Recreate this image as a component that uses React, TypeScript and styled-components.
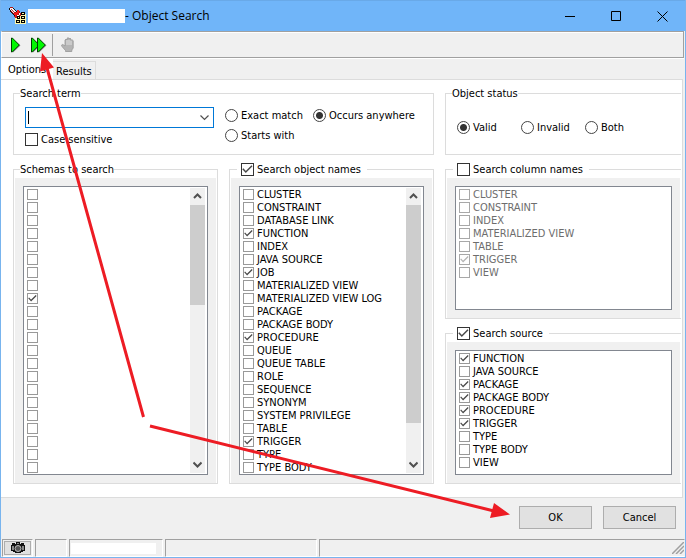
import React from "react";
import styled, { createGlobalStyle, css } from "styled-components";

const GlobalStyle = createGlobalStyle`
  *, *::before, *::after { box-sizing: border-box; }
  body {
    margin: 0;
    background: #f0f0f0;
    color: #000;
    font: 11px/13px "DejaVu Sans Condensed", "Noto Sans", sans-serif;
  }
  button, input { font: inherit; color: inherit; }
`;

const Window = styled.div`
  position: relative;
  display: flex;
  flex-direction: column;
  min-height: 100vh;
  border: 1px solid #78b4ee;
  border-top: 0;
  background: #f0f0f0;
  overflow: hidden;
`;

const TitleBar = styled.header`
  display: flex;
  align-items: center;
  height: 31px;
  padding-left: 8px;
  background: #70b5f9;
  border-top: 1px solid #69a9e8;
`;

const AppIcon = styled.svg`
  flex: none;
  width: 18px;
  height: 18px;
  margin-right: 1px;
`;

const Redacted = styled.span<{ $w: number; $h: number }>`
  flex: none;
  width: ${(p) => p.$w}px;
  height: ${(p) => p.$h}px;
  background: #fff;
`;

const Title = styled.h1`
  flex: 1;
  margin: 0;
  font: 12px/16px "Open Sans", "Noto Sans", sans-serif;
  white-space: nowrap;
`;

const CaptionButton = styled.button`
  display: grid;
  place-items: center;
  width: 46px;
  height: 30px;
  padding: 0;
  border: 0;
  background: none;
`;

const Toolbar = styled.div`
  display: flex;
  align-items: center;
  height: 27px;
  margin: 0 1px 0 0;
  padding-left: 2px;
  border: 1px solid #a0a0a0;
  border-left-color: #fff;
  box-shadow: inset 0 1px #fff, 0 1px #fff;
`;

const ToolButton = styled.button`
  display: grid;
  place-items: center;
  width: 23px;
  height: 22px;
  padding: 0;
  border: 0;
  background: none;
`;

const Separator = styled.span`
  width: 1px;
  height: 22px;
  margin: 0 3px 0 2px;
  background: #a0a0a0;
`;

const Tabs = styled.div`
  display: flex;
  align-items: flex-end;
  height: 20px;
  margin-top: 1px;
`;

const Tab = styled.button<{ $active?: boolean }>`
  height: 18px;
  padding: 1px 3px 0;
  border: 1px solid #dcdcdc;
  border-bottom: 0;
  border-left: 0;
  background: #f0f0f0;
  text-align: left;
  ${(p) =>
    p.$active &&
    css`
      height: 20px;
      width: 52px;
      padding: 0 0 0 7px;
      border-color: #fff;
      background: #fff;
    `}
`;

const Page = styled.main`
  flex: 1;
  display: grid;
  grid-template-columns: 205fr 205fr 236fr;
  grid-template-rows: 68px 1fr;
  gap: 8px 11px;
  margin-right: 2px;
  padding: 7px 1px 13px 12px;
  background: #fff;
  border: solid #dcdcdc;
  border-width: 1px 1px 1px 0;
`;

const Group = styled.fieldset<{ $wide?: boolean; $open?: boolean }>`
  display: flex;
  flex-direction: column;
  min-width: 0;
  margin: 0;
  padding: 0 1px;
  border: 1px solid #dcdcdc;
  ${(p) => p.$wide && "grid-column: span 2;"}
  ${(p) => p.$open && "border-right: 0;"}
`;

const Legend = styled.legend<{ $check?: boolean }>`
  height: 13px;
  margin-left: ${(p) => (p.$check ? 6 : 5)}px;
  padding: 0 ${(p) => (p.$check ? 6 : 0)}px 0 ${(p) => (p.$check ? 4 : 0)}px;
  white-space: nowrap;
`;

const RightColumn = styled.div`
  display: grid;
  grid-template-rows: 156px 1fr;
  gap: 8px;
  min-width: 0;
`;

const ListArea = styled.div`
  flex: 1;
  display: flex;
  margin-top: 2px;
  padding: 8px;
  background: #f0f0f0;
`;

const ListBox = styled.div<{ $disabled?: boolean }>`
  flex: 1;
  display: flex;
  min-width: 0;
  border: 1px solid #828790;
  background: #fff;
  color: ${(p) => (p.$disabled ? "#6d6d6d" : "#000")};
`;

const Items = styled.ul`
  flex: 1;
  margin: 0;
  padding: 1px 0 0 3px;
  list-style: none;
`;

const Item = styled.label`
  display: flex;
  align-items: center;
  gap: 3px;
  height: 13px;
  line-height: 15px;
  white-space: nowrap;
`;

const CHECK =
  "url(\"data:image/svg+xml,%3Csvg xmlns='http://www.w3.org/2000/svg' viewBox='0 0 11 11'%3E%3Cpath d='M.8 4.800 3.800 8 10 1.800' fill='none' stroke='%23484848' stroke-width='1.5'/%3E%3C/svg%3E\")";
const CHECK_OFF = CHECK.replace("%23484848", "%23b4b4b4");

const Check = styled.input.attrs({ type: "checkbox" })<{ $large?: boolean }>`
  appearance: none;
  flex: none;
  width: ${(p) => (p.$large ? 13 : 11)}px;
  height: ${(p) => (p.$large ? 13 : 11)}px;
  margin: 0;
  border: 1px solid ${(p) => (p.$large ? "#333" : "#999")};
  background: #fff center / 100% 100% no-repeat;
  &:checked { background-image: ${CHECK}; }
  &:disabled { border-color: #a8a8a8; }
  &:disabled:checked { background-image: ${CHECK_OFF}; }
`;

const Option = styled.label`
  display: flex;
  align-items: center;
  gap: 3px;
  height: 13px;
  line-height: 15px;
  white-space: nowrap;
`;

const Radio = styled.input.attrs({ type: "radio" })`
  appearance: none;
  flex: none;
  width: 13px;
  height: 13px;
  margin: 0;
  border: 1px solid #444;
  border-radius: 50%;
  background: #fff;
  &:checked { background: radial-gradient(circle, #333 3px, #fff 4px); }
`;

const TermBody = styled.div`
  display: grid;
  grid-template-columns: 189px 1fr;
  column-gap: 11px;
  padding: 7px 10px 0;
`;

const TermColumn = styled.div`
  display: flex;
  flex-direction: column;
  gap: 5px;
`;

const ComboBox = styled.div`
  display: flex;
  align-items: center;
  height: 21px;
  padding-left: 2px;
  border: 1px solid #0078d7;
  background: #fff;
`;

const Caret = styled.span`
  width: 1px;
  height: 13px;
  background: #000;
`;

const ComboInput = styled.input`
  flex: 1;
  min-width: 0;
  padding: 0 2px;
  border: 0;
  outline: 0;
  background: none;
`;

const ComboButton = styled.button`
  display: grid;
  place-items: center;
  width: 17px;
  height: 19px;
  padding: 0;
  border: 0;
  background: none;
`;

const MatchOptions = styled.div`
  display: grid;
  grid-template-columns: 88px auto;
  align-content: start;
  gap: 7px 0;
  padding-top: 2px;
`;

const StatusOptions = styled.div`
  display: grid;
  grid-template-columns: 64px 64px auto;
  padding: 21px 10px 0;
`;

const ScrollTrack = styled.div`
  display: flex;
  flex-direction: column;
  justify-content: space-between;
  width: 15px;
  margin: 1px 2px 1px 0;
  background: #f0f0f0;
`;

const ScrollButton = styled.button`
  display: grid;
  place-items: center;
  flex: none;
  width: 15px;
  height: 17px;
  padding: 0;
  border: 0;
  background: none;
`;

const ScrollRail = styled.div`
  flex: 1;
`;

const Thumb = styled.div<{ $size: number }>`
  height: ${(p) => p.$size}%;
  background: #cdcdcd;
`;

const Footer = styled.footer`
  display: flex;
  justify-content: flex-end;
  gap: 11px;
  height: 41px;
  padding: 8px 9px 0;
`;

const PushButton = styled.button`
  width: 73px;
  height: 23px;
  padding: 0;
  border: 1px solid #adadad;
  background: #e1e1e1;
`;

const StatusBar = styled.div`
  display: flex;
  gap: 2px;
  height: 18px;
  padding-left: 1px;
`;

const StatusPanel = styled.div<{ $w?: number }>`
  ${(p) => (p.$w ? `width: ${p.$w}px;` : "flex: 1;")}
  display: flex;
  align-items: center;
  justify-content: ${(p) => (p.$w ? "flex-start" : "flex-end")};
  border: 1px solid #a0a0a0;
  border-right-color: ${(p) => (p.$w ? "#fff" : "#f0f0f0")};
  border-bottom-color: #fff;
  padding-left: 1px;
`;

const CameraButton = styled.button`
  display: grid;
  place-items: center;
  width: 27px;
  height: 14px;
  padding: 0;
  border: 1px solid #adadad;
  background: #e1e1e1;
`;

const Annotation = styled.svg`
  position: absolute;
  top: 0;
  left: 0;
  pointer-events: none;
`;

function FlashlightIcon() {
  return (
    <AppIcon viewBox="0 0 18 18" shapeRendering="crispEdges" aria-hidden="true">
      <path d="M6 9h2V8h2V7h7v10H6z" fill="#fff7a8" />
      <path d="M0 1h1V0h3v1h1v1h1v1h1v1h1V3h2v1h1v2h1v3h-1v1H9v1H6v-1H5V8H4V7H3V6H2V5H1V3H0z" fill="#b01818" />
      <path d="M0 1h1v2h1v2h1v1h1v1h1v1h1v1H5V8H4V7H3V6H2V5H1V3H0zM4 1h1v1h1v1h1v1h1v1H7V4H6V3H5V2H4z" fill="#111" />
      <path d="M1 1h3v1h1v1h1v1h1v1H5v1H4V5H3V4H2V3H1z" fill="#f4f4f4" />
      <path d="M2 2h1v1h1v1h1v1H4V4H3V3H2z" fill="#c03030" />
      <path d="M8 3h2v3H9v2H7v2H6V8H5V6h2V5h1z" fill="#f01818" />
      <path d="M10 6h1v2h-1v1H8V8h2z" fill="#fff" />
      <g fill="#fff7a8" stroke="#000">
        <rect x="8.500" y="9.500" width="2" height="2" />
        <rect x="12.500" y="5.500" width="3" height="2" />
        <rect x="12.500" y="9.500" width="3" height="2" />
        <rect x="7.500" y="13.500" width="3" height="2" />
        <rect x="12.500" y="13.500" width="3" height="2" />
      </g>
    </AppIcon>
  );
}

function PlayIcon({ double = false }: { double?: boolean }) {
  const shapes = double ? [0, 6] : [0];
  return (
    <svg width={double ? 16 : 10} height="16" viewBox={double ? "0 0 16 16" : "0 0 10 16"} aria-hidden="true">
      {shapes.map((x) => (
        <g key={x} transform={`translate(${x} 0)`}>
          <path d="M2 2.500v13l7.500-7z" fill="#8c8c8c" />
          <path d="M.5 1v14h.8l7-7-7-7z" fill="#00f800" stroke="#003c00" />
        </g>
      ))}
    </svg>
  );
}

function HandIcon() {
  return (
    <svg width="14" height="16" viewBox="0 0 14 16" aria-hidden="true">
      <path
        d="M4.500 14.500v-1L1 9.500.6 8l1.100-.6L4 9V3l1-.8 1 .8V1.500l1-.9 1 .9V2l1-.8 1 .8v1.500l1.200-.6 1 .8V11l-1.400 2v1.500z"
        fill="#b4b4b4"
        stroke="#959595"
        strokeWidth=".8"
      />
      <path d="M6 3v5M8 3v5M10 3.500V8" stroke="#ececec" strokeWidth=".8" />
    </svg>
  );
}

function Chevron({ up = false, thin = false }: { up?: boolean; thin?: boolean }) {
  return (
    <svg width="9" height="7" viewBox="0 0 9 7" aria-hidden="true">
      <path
        d={up ? "M1 5 4.500 1.500 8 5" : "M.5 1.500l4 4 4-4"}
        fill="none"
        stroke="#505050"
        strokeWidth={thin ? 1.2 : 2}
      />
    </svg>
  );
}

function ScrollBar({ size }: { size: number }) {
  return (
    <ScrollTrack>
      <ScrollButton aria-label="Scroll up"><Chevron up /></ScrollButton>
      <ScrollRail><Thumb $size={size} /></ScrollRail>
      <ScrollButton aria-label="Scroll down"><Chevron /></ScrollButton>
    </ScrollTrack>
  );
}

interface CheckListProps {
  names: string[];
  checked: number[];
  disabled?: boolean;
  thumb?: number;
}

function CheckList({ names, checked, disabled, thumb }: CheckListProps) {
  return (
    <ListArea>
      <ListBox $disabled={disabled}>
        <Items>
          {names.map((name, i) => (
            <li key={i}>
              <Item>
                <Check
                  defaultChecked={checked.includes(i)}
                  disabled={disabled}
                  aria-label={name ? undefined : `Schema ${i + 1}`}
                />
                {name}
              </Item>
            </li>
          ))}
        </Items>
        {thumb !== undefined && <ScrollBar size={thumb} />}
      </ListBox>
    </ListArea>
  );
}

function CheckLegend({ text, checked }: { text: string; checked?: boolean }) {
  return (
    <Legend $check>
      <Option>
        <Check $large defaultChecked={checked} />
        {text}
      </Option>
    </Legend>
  );
}

const SCHEMAS: string[] = Array(22).fill("");
const OBJECTS = [
  "CLUSTER", "CONSTRAINT", "DATABASE LINK", "FUNCTION", "INDEX", "JAVA SOURCE", "JOB",
  "MATERIALIZED VIEW", "MATERIALIZED VIEW LOG", "PACKAGE", "PACKAGE BODY", "PROCEDURE",
  "QUEUE", "QUEUE TABLE", "ROLE", "SEQUENCE", "SYNONYM", "SYSTEM PRIVILEGE", "TABLE",
  "TRIGGER", "TYPE", "TYPE BODY",
];
const COLUMNS = ["CLUSTER", "CONSTRAINT", "INDEX", "MATERIALIZED VIEW", "TABLE", "TRIGGER", "VIEW"];
const SOURCES = [
  "FUNCTION", "JAVA SOURCE", "PACKAGE", "PACKAGE BODY", "PROCEDURE", "TRIGGER", "TYPE",
  "TYPE BODY", "VIEW",
];

export default function App() {
  return (
    <>
      <GlobalStyle />
      <Window>
        <TitleBar>
          <FlashlightIcon />
          <Redacted $w={97} $h={14} />
          <Title>- Object Search</Title>
          <CaptionButton aria-label="Minimize">
            <svg width="11" height="11"><path d="M0 5.500h10" stroke="#000" /></svg>
          </CaptionButton>
          <CaptionButton aria-label="Maximize">
            <svg width="11" height="11"><path d="M.5.5h9v9h-9z" fill="none" stroke="#000" /></svg>
          </CaptionButton>
          <CaptionButton aria-label="Close">
            <svg width="11" height="11"><path d="M.5.5l10 10M10.500.5l-10 10" stroke="#000" /></svg>
          </CaptionButton>
        </TitleBar>

        <Toolbar role="toolbar">
          <ToolButton aria-label="Search"><PlayIcon /></ToolButton>
          <ToolButton aria-label="Search all"><PlayIcon double /></ToolButton>
          <Separator />
          <ToolButton aria-label="Stop" disabled><HandIcon /></ToolButton>
        </Toolbar>

        <Tabs role="tablist">
          <Tab $active role="tab" aria-selected="true">Options</Tab>
          <Tab role="tab" aria-selected="false">Results</Tab>
        </Tabs>

        <Page>
          <Group $wide>
            <Legend>Search term</Legend>
            <TermBody>
              <TermColumn>
                <ComboBox>
                  <Caret />
                  <ComboInput role="combobox" aria-expanded="false" aria-label="Search term" />
                  <ComboButton aria-label="Show history"><Chevron thin /></ComboButton>
                </ComboBox>
                <Option><Check $large />Case sensitive</Option>
              </TermColumn>
              <MatchOptions>
                <Option><Radio name="match" />Exact match</Option>
                <Option><Radio name="match" defaultChecked />Occurs anywhere</Option>
                <Option><Radio name="match" />Starts with</Option>
              </MatchOptions>
            </TermBody>
          </Group>

          <Group $open>
            <Legend>Object status</Legend>
            <StatusOptions>
              <Option><Radio name="status" defaultChecked />Valid</Option>
              <Option><Radio name="status" />Invalid</Option>
              <Option><Radio name="status" />Both</Option>
            </StatusOptions>
          </Group>

          <Group>
            <Legend>Schemas to search</Legend>
            <CheckList names={SCHEMAS} checked={[8]} thumb={40} />
          </Group>

          <Group>
            <CheckLegend text="Search object names" checked />
            <CheckList names={OBJECTS} checked={[3, 6, 11, 19]} thumb={87} />
          </Group>

          <RightColumn>
            <Group $open>
              <CheckLegend text="Search column names" />
              <CheckList names={COLUMNS} checked={[5]} disabled />
            </Group>
            <Group $open>
              <CheckLegend text="Search source" checked />
              <CheckList names={SOURCES} checked={[0, 2, 3, 4, 5]} />
            </Group>
          </RightColumn>
        </Page>

        <Footer>
          <PushButton>OK</PushButton>
          <PushButton>Cancel</PushButton>
        </Footer>

        <StatusBar>
          <StatusPanel $w={31}>
            <CameraButton aria-label="Capture">
              <svg width="14" height="12" viewBox="0 0 14 12" aria-hidden="true">
                <path d="M0 3h1V1h3v1h1V0h4v2h1V1h3v2h1v6h-2v1h-2v1H4v-1H2V9H0z" fill="#111" />
                <path d="M1 4h2v4H1zM11 4h2v4h-2zM6 1h2v1H6z" fill="#888" />
                <circle cx="7" cy="6.500" r="3" fill="#555" stroke="#bbb" />
              </svg>
            </CameraButton>
          </StatusPanel>
          <StatusPanel $w={32} />
          <StatusPanel $w={94}><Redacted $w={85} $h={11} /></StatusPanel>
          <StatusPanel $w={152} />
          <StatusPanel>
            <svg width="12" height="12" viewBox="0 0 12 12" aria-hidden="true">
              <path d="M0 12 12 0M4 12l8-8M8 12l4-4" stroke="#a0a0a0" strokeWidth="1.500" />
            </svg>
          </StatusPanel>
        </StatusBar>

        <Annotation width="686" height="558" viewBox="1 0 686 558" aria-hidden="true">
          <g stroke="#ed1c24" strokeWidth="3" fill="#ed1c24">
            <path d="M143.500 417 47 68M150 426l344 85" />
            <path d="M42 53 54 67.500 40 71.500z M510 514.500 494 503l-4 15z" stroke="none" />
          </g>
        </Annotation>
      </Window>
    </>
  );
}
